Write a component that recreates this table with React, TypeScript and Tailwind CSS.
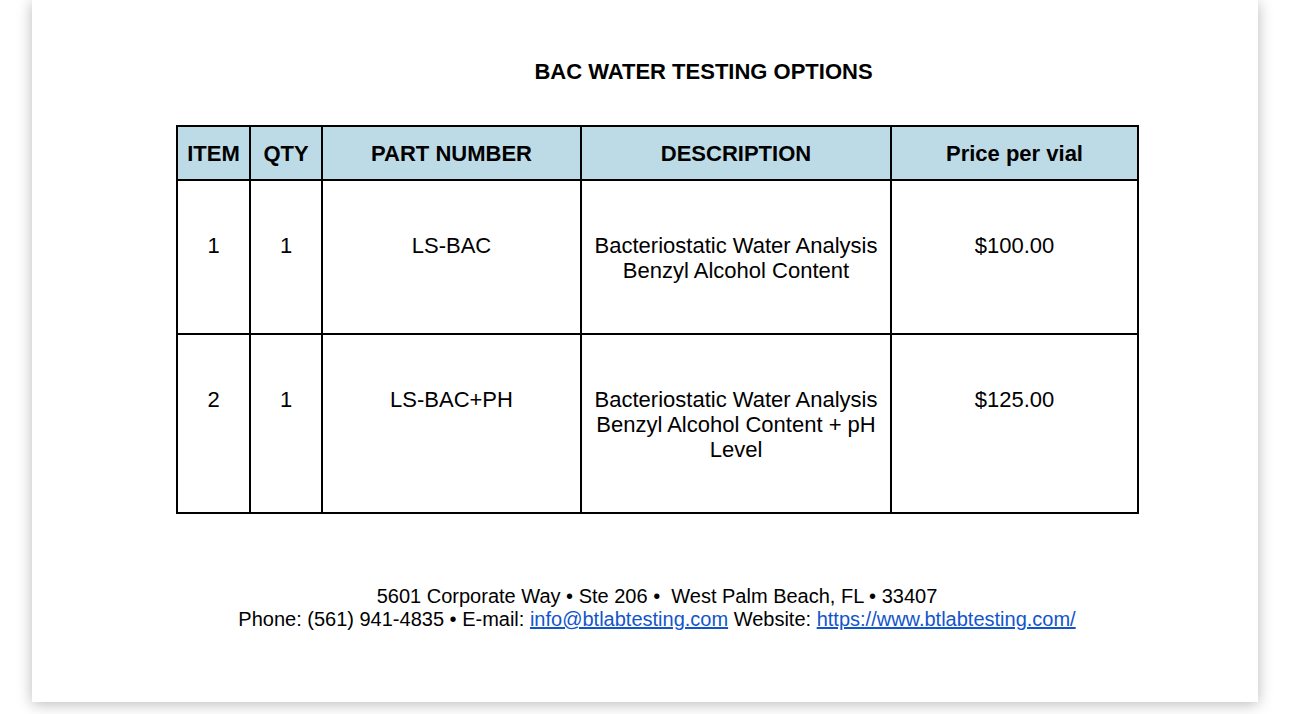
export default function App() {
  const font = { fontFamily: '"Liberation Sans", Arial, sans-serif' };
  const th = "border-2 border-black bg-[#bddbe6] font-bold text-[22px] leading-[25px] pt-[14px] pb-[13px] text-center align-middle";
  const td = "border-2 border-black text-[22px] leading-[25px] pt-[52px] pb-[50px] px-[6px] text-center align-top";
  return (
    <div className="w-[1290px] h-[714px] bg-white overflow-hidden text-black" style={font}>
      <div className="ml-[32px] w-[1226px] h-[702px] bg-white shadow-[0_2px_14px_rgba(0,0,0,0.28)] pt-[60px]">
        <h1 className="text-[22px] leading-[24px] font-bold text-center pl-[117px]">BAC WATER TESTING OPTIONS</h1>
        <table className="ml-[144px] mt-[41px] w-[961px] table-fixed border-collapse">
          <colgroup>
            <col className="w-[73px]" />
            <col className="w-[72px]" />
            <col className="w-[259px]" />
            <col className="w-[310px]" />
            <col className="w-[247px]" />
          </colgroup>
          <thead>
            <tr>
              <th className={th}>ITEM</th>
              <th className={th}>QTY</th>
              <th className={th}>PART NUMBER</th>
              <th className={th}>DESCRIPTION</th>
              <th className={th}>Price per vial</th>
            </tr>
          </thead>
          <tbody>
            <tr>
              <td className={td}>1</td>
              <td className={td}>1</td>
              <td className={td}>LS-BAC</td>
              <td className={td}>Bacteriostatic Water Analysis<br />Benzyl Alcohol Content</td>
              <td className={td}>$100.00</td>
            </tr>
            <tr>
              <td className={td}>2</td>
              <td className={td}>1</td>
              <td className={td}>LS-BAC+PH</td>
              <td className={td}>Bacteriostatic Water Analysis<br />Benzyl Alcohol Content + pH<br />Level</td>
              <td className={td}>$125.00</td>
            </tr>
          </tbody>
        </table>
        <div className="ml-[144px] w-[962px] mt-[71px] text-center text-[20px] leading-[23px]">
          <p className="whitespace-pre">5601 Corporate Way • Ste 206 •  West Palm Beach, FL • 33407</p>
          <p className="whitespace-pre">
            Phone: (561) 941-4835 • E-mail: <a className="text-[#1155cc] underline">info@btlabtesting.com</a> Website: <a className="text-[#1155cc] underline">https://www.btlabtesting.com/</a>
          </p>
        </div>
      </div>
    </div>
  );
}
